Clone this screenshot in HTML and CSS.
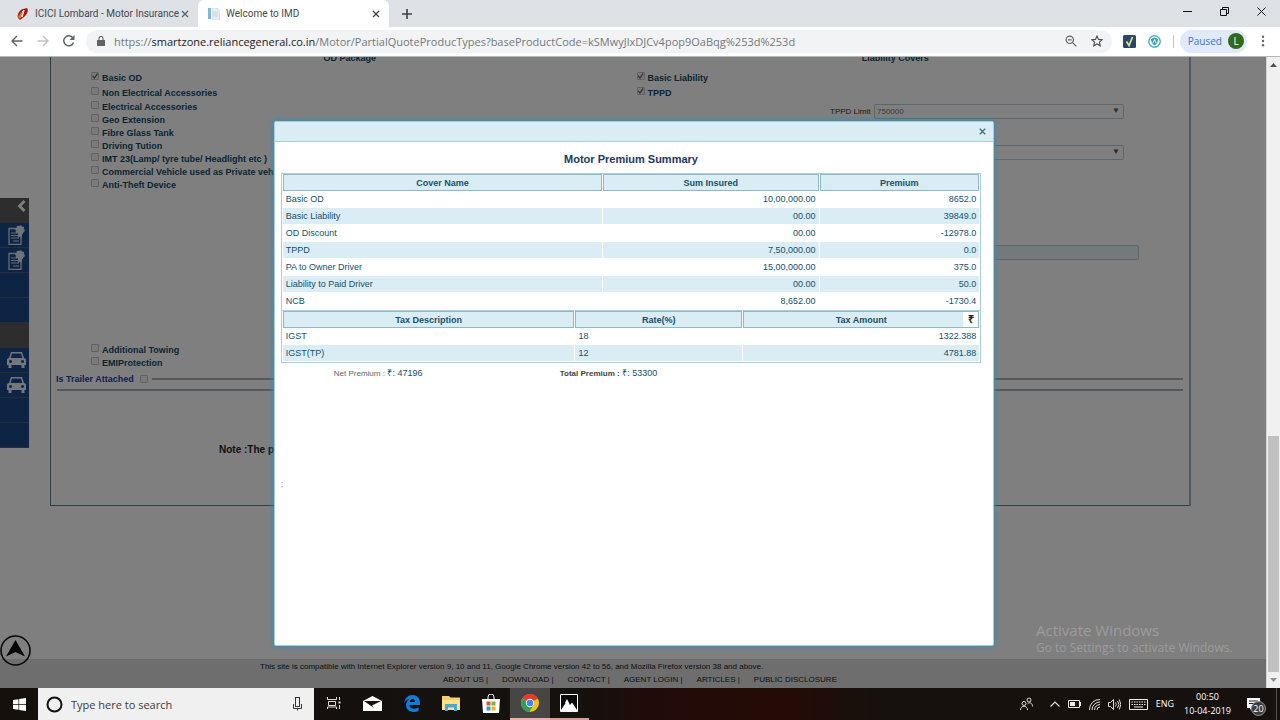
FILE: index.html
```html
<!DOCTYPE html>
<html lang="en">
<head>
<meta charset="utf-8">
<title>Welcome to IMD</title>
<link rel="stylesheet" href="styles.css">
</head>
<body>
<header class="tabstrip">
  <div class="tab tab-idle">
    <svg class="favicon" viewBox="0 0 12 12"><path d="M1 10C0 7 2 2 6 1l4-1c2 2 0 7-3 9l-4 3z" fill="#a3171b"/><path d="M1 9l3-5 2 3-3 4z" fill="#e87722"/><path d="M7 2L5 9M5 4l2-1" stroke="#fff" stroke-width="1.3"/></svg>
    <span class="tab-title">ICICI Lombard - Motor Insurance</span>
    <button class="icon-btn" aria-label="Close tab"><svg width="8" height="8" viewBox="0 0 8 8"><path d="M1 1l6 6M7 1L1 7" stroke="#5f6368" stroke-width="1.3"/></svg></button>
  </div>
  <div class="tab tab-active">
    <svg class="favicon" viewBox="0 0 12 12"><path d="M0 0h3v11H0z" fill="#7fb5dc"/><path d="M4 0h5l3 3v9H4z" fill="#e8eef4" stroke="#c5d0da" stroke-width=".6"/><path d="M5 4h5M5 6h5M5 8h5" stroke="#b9c6d2" stroke-width=".7"/></svg>
    <span class="tab-title">Welcome to IMD</span>
    <button class="icon-btn" aria-label="Close tab"><svg width="8" height="8" viewBox="0 0 8 8"><path d="M1 1l6 6M7 1L1 7" stroke="#3c4043" stroke-width="1.3"/></svg></button>
  </div>
  <button class="icon-btn new-tab" aria-label="New tab"><svg width="10" height="10" viewBox="0 0 10 10"><path d="M5 0v10M0 5h10" stroke="#3c4043" stroke-width="1.6"/></svg></button>
  <div class="window-controls">
    <button class="icon-btn" aria-label="Minimize"><svg width="9" height="9" viewBox="0 0 9 9"><path d="M0 4.5h9" stroke="#111"/></svg></button>
    <button class="icon-btn" aria-label="Restore"><svg width="9" height="9" viewBox="0 0 9 9" fill="none" stroke="#111"><path d="M.5 2.5h6v6h-6zM2.500 2.500v-2h6v6h-2"/></svg></button>
    <button class="icon-btn" aria-label="Close"><svg width="9" height="9" viewBox="0 0 9 9"><path d="M.5.5l8 8M8.500.5l-8 8" stroke="#111"/></svg></button>
  </div>
</header>
<div class="toolbar">
  <button class="icon-btn" aria-label="Back"><svg width="12" height="12" viewBox="0 0 12 12" fill="none" stroke="#5f6368" stroke-width="1.4"><path d="M11.500 6H1M6 1L1 6l5 5"/></svg></button>
  <button class="icon-btn" aria-label="Forward"><svg width="12" height="12" viewBox="0 0 12 12" fill="none" stroke="#bdc1c6" stroke-width="1.4"><path d="M.5 6H11M6 1l5 5-5 5"/></svg></button>
  <button class="icon-btn" aria-label="Reload"><svg width="12" height="12" viewBox="0 0 12 12"><path d="M10.500 7.500A5 5 0 1 1 9.600 2.600" fill="none" stroke="#5f6368" stroke-width="1.5"/><path d="M11.500 0v5h-5z" fill="#5f6368"/></svg></button>
  <div class="address">
    <svg width="8" height="10" viewBox="0 0 8 10"><path d="M0 4h8v6H0z" fill="#5f6368"/><path d="M2 4V2.500a2 2 0 0 1 4 0V4" fill="none" stroke="#5f6368" stroke-width="1.1"/></svg>
    <span class="url">https://<b>smartzone.reliancegeneral.co.in</b>/Motor/PartialQuoteProducTypes?baseProductCode=kSMwyJlxDJCv4pop9OaBqg%253d%253d</span>
    <button class="icon-btn" aria-label="Zoom"><svg width="12" height="12" viewBox="0 0 12 12" fill="none" stroke="#5f6368" stroke-width="1.2"><circle cx="4.800" cy="4.800" r="3.700"/><path d="M7.600 7.600l3.800 3.800M3 4.800h3.600"/></svg></button>
    <button class="icon-btn" aria-label="Bookmark"><svg width="12" height="12" viewBox="0 0 12 12" fill="none" stroke="#4a4e52" stroke-width="1.1"><path d="M6 1l1.500 3.400 3.700.3-2.800 2.400.9 3.700L6 8.900l-3.300 1.900.9-3.700L.8 4.700l3.700-.3z"/></svg></button>
  </div>
  <div class="extensions">
    <svg width="13" height="13" viewBox="0 0 13 13"><rect width="13" height="13" rx="1.500" fill="#24486f"/><path d="M3.500 6.500l2.500 4 3.500-8.500" fill="none" stroke="#e6de6a" stroke-width="1.800"/></svg>
    <svg width="13" height="13" viewBox="0 0 13 13"><circle cx="6.500" cy="6.500" r="5.700" fill="#fff" stroke="#45b5bd" stroke-width="1.400"/><path d="M6.500 2.500L10 4c0 3-1 5-3.500 6.500C4 9 3 7 3 4z" fill="#3a9daf"/><path d="M5 8l1.500-3.500L8 8" stroke="#fff" fill="none"/></svg>
  </div>
  <button class="profile">Paused <span class="avatar">L</span></button>
  <button class="icon-btn" aria-label="Menu"><svg width="4" height="12" viewBox="0 0 4 12" fill="#5f6368"><circle cx="2" cy="1.800" r="1.200"/><circle cx="2" cy="6" r="1.200"/><circle cx="2" cy="10.200" r="1.200"/></svg></button>
</div>

<div class="viewport">
  <div class="page">
    <main class="panel">
      <div class="covers">
        <section class="column">
          <h2>OD Package</h2>
          <label class="check tall"><input type="checkbox" checked disabled>Basic OD</label>
          <label class="check tall"><input type="checkbox" disabled>Non Electrical Accessories</label>
          <label class="check"><input type="checkbox" disabled>Electrical Accessories</label>
          <label class="check"><input type="checkbox" disabled>Geo Extension</label>
          <label class="check"><input type="checkbox" disabled>Fibre Glass Tank</label>
          <label class="check"><input type="checkbox" disabled>Driving Tution</label>
          <label class="check"><input type="checkbox" disabled>IMT 23(Lamp/ tyre tube/ Headlight etc )</label>
          <label class="check"><input type="checkbox" disabled>Commercial Vehicle used as Private vehicle</label>
          <label class="check"><input type="checkbox" disabled>Anti-Theft Device</label>
          <div class="addons">
            <label class="check"><input type="checkbox" disabled>Additional Towing</label>
            <label class="check"><input type="checkbox" disabled>EMIProtection</label>
          </div>
        </section>
        <section class="column">
          <h2>Liability Covers</h2>
          <label class="check tall"><input type="checkbox" checked disabled>Basic Liability</label>
          <label class="check tall"><input type="checkbox" checked disabled>TPPD</label>
          <div class="fields">
            <label for="tppd">TPPD Limit</label>
            <span class="drop"><select id="tppd" disabled><option>750000</option></select></span>
            <span class="drop second"><select aria-label="Cover limit" disabled><option></option></select></span>
            <input class="text-field" type="text" aria-label="Details" disabled>
          </div>
        </section>
      </div>
      <div class="trailer">
        <label>Is Trailer Attached <input type="checkbox" disabled></label>
      </div>
      <p class="note">Note :The premium</p>
    </main>
    <footer class="footer">
      <p>This site is compatible with Internet Explorer version 9, 10 and 11, Google Chrome version 42 to 56, and Mozilla Firefox version 38 and above.</p>
      <nav><a href="#">ABOUT US |</a><a href="#">DOWNLOAD |</a><a href="#">CONTACT |</a><a href="#">AGENT LOGIN |</a><a href="#">ARTICLES |</a><a href="#">PUBLIC DISCLOSURE</a></nav>
    </footer>

    <aside class="rail">
      <div class="rail-head"><svg width="9" height="12" viewBox="0 0 9 12"><path d="M7.500 1L2.500 6l5 5" fill="none" stroke="#fff" stroke-width="2.800"/></svg></div>
      <div class="rail-item"><svg width="17" height="20" viewBox="0 0 17 20"><path d="M9 3.500H1v16h12v-9" fill="none" stroke="#cfdcea" stroke-width="1.300"/><path d="M3 8h6M3 10.500h7M3 13h8M5 16h6" stroke="#cfdcea" stroke-width="1.200"/><circle cx="12" cy="5" r="4" fill="#dfe8f2" stroke="#dfe8f2" stroke-width="1.500" stroke-dasharray="2 1"/><path d="M10 8h4v5l-2-1.500-2 1.500z" fill="#dfe8f2"/></svg></div>
      <div class="rail-item"><svg width="17" height="20" viewBox="0 0 17 20"><path d="M9 3.500H1v16h12v-9" fill="none" stroke="#cfdcea" stroke-width="1.300"/><path d="M3 8h6M3 10.500h7M3 13h8M5 16h6" stroke="#cfdcea" stroke-width="1.200"/><circle cx="12" cy="5" r="4" fill="#dfe8f2" stroke="#dfe8f2" stroke-width="1.500" stroke-dasharray="2 1"/><path d="M10 8h4v5l-2-1.500-2 1.500z" fill="#dfe8f2"/></svg></div>
      <div class="rail-item"></div>
      <div class="rail-item"></div>
      <div class="rail-gap"></div>
      <div class="rail-item"><svg width="19" height="16" viewBox="0 0 19 16"><path fill="#e8eff8" fill-rule="evenodd" d="M4 0h11l2 6 2 1v6h-1.500v3h-3v-3h-10v3h-3v-3H0V7l2-1zM5 1.500L3.700 6h11.600L14 1.500zM3.500 8a1.500 1.500 0 1 0 .1 0zm12 0a1.500 1.500 0 1 0 .1 0z"/></svg></div>
      <div class="rail-item"><svg width="19" height="16" viewBox="0 0 19 16"><path fill="#e8eff8" fill-rule="evenodd" d="M4 0h11l2 6 2 1v6h-1.500v3h-3v-3h-10v3h-3v-3H0V7l2-1zM5 1.500L3.700 6h11.600L14 1.500zM3.500 8a1.500 1.500 0 1 0 .1 0zm12 0a1.500 1.500 0 1 0 .1 0z"/></svg></div>
      <div class="rail-item"></div>
      <div class="rail-item"></div>
    </aside>
    <button class="to-top" aria-label="Back to top"><svg width="31" height="31" viewBox="0 0 31 31"><circle cx="15.500" cy="15.500" r="14.500" fill="none" stroke="#111" stroke-width="1.600"/><path d="M15.500 5L25 21.500l-9.500-4.500L6 21.500z" fill="#000"/></svg></button>

    <div class="overlay">
      <div class="dialog" role="dialog" aria-labelledby="summary-title">
        <div class="dialog-bar"><button class="icon-btn" aria-label="Close dialog"><svg width="7" height="7" viewBox="0 0 7 7"><path d="M.8.8l5.400 5.400M6.200.8L.8 6.200" stroke="#4a7890" stroke-width="1.500"/></svg></button></div>
        <div class="dialog-body">
          <h1 id="summary-title">Motor Premium Summary</h1>
          <table class="grid cover-grid">
            <colgroup><col class="c-name"><col class="c-sum"><col></colgroup>
            <thead><tr><th>Cover Name</th><th>Sum Insured</th><th>Premium</th></tr></thead>
            <tbody>
              <tr><td>Basic OD</td><td class="num">10,00,000.00</td><td class="num">8652.0</td></tr>
              <tr><td>Basic Liability</td><td class="num">00.00</td><td class="num">39849.0</td></tr>
              <tr><td>OD Discount</td><td class="num">00.00</td><td class="num">-12978.0</td></tr>
              <tr><td>TPPD</td><td class="num">7,50,000.00</td><td class="num">0.0</td></tr>
              <tr><td>PA to Owner Driver</td><td class="num">15,00,000.00</td><td class="num">375.0</td></tr>
              <tr><td>Liability to Paid Driver</td><td class="num">00.00</td><td class="num">50.0</td></tr>
              <tr><td>NCB</td><td class="num">8,652.00</td><td class="num">-1730.4</td></tr>
            </tbody>
          </table>
          <table class="grid tax-grid">
            <colgroup><col class="c-tax"><col class="c-rate"><col></colgroup>
            <thead><tr><th>Tax Description</th><th>Rate(%)</th><th>Tax Amount<span class="rupee">₹</span></th></tr></thead>
            <tbody>
              <tr><td>IGST</td><td>18</td><td class="num">1322.388</td></tr>
              <tr><td>IGST(TP)</td><td>12</td><td class="num">4781.88</td></tr>
            </tbody>
          </table>
          <div class="totals">
            <div><span class="net-label">Net Premium :</span> ₹: 47196</div>
            <div><span class="total-label">Total Premium :</span> ₹: 53300</div>
          </div>
          <p class="stray">;</p>
        </div>
      </div>
    </div>
    <div class="watermark"><p class="wm-title">Activate Windows</p><p>Go to Settings to activate Windows.</p></div>
  </div>
  <div class="scrollbar">
    <svg width="7" height="4" viewBox="0 0 7 4"><path d="M3.500 0L7 4H0z" fill="#505050"/></svg>
    <div class="thumb"></div>
    <svg width="7" height="4" viewBox="0 0 7 4"><path d="M0 0h7L3.500 4z" fill="#909090"/></svg>
  </div>
</div>

<div class="taskbar">
  <button class="start" aria-label="Start"><svg width="13" height="13" viewBox="0 0 13 13" fill="#fff"><path d="M0 2l5.500-.8V6H0zM6.200 1L13 0v6H6.200zM0 6.800h5.500v4.900L0 11zM6.200 6.800H13V13l-6.800-1z"/></svg></button>
  <div class="search">
    <svg width="17" height="17" viewBox="0 0 17 17"><circle cx="8.500" cy="8.500" r="7" fill="none" stroke="#111" stroke-width="2"/></svg>
    <input type="text" placeholder="Type here to search" aria-label="Search">
    <svg width="9" height="14" viewBox="0 0 9 14" fill="none" stroke="#333"><rect x="2.500" y=".5" width="4" height="9"/><path d="M.5 7v4.500h8V7M4.500 11.500v2"/></svg>
  </div>
  <div class="apps">
    <button aria-label="Task view"><svg width="14" height="14" viewBox="0 0 14 14" fill="none" stroke="#ddd"><path d="M.5 1v2.500h9V1M1.500 5.500h7v4h-7zM.5 13v-2h9v2M12.500 1v3M12.500 9v4"/><path d="M11.500 6.500h2" stroke-width="2"/></svg></button>
    <button aria-label="Mail"><svg width="19" height="15" viewBox="0 0 19 15"><path d="M0 5l9.500-5L19 5v10H0z" fill="#fff"/><path d="M1 5h17L9 9.500l2 2.500z" fill="#16110e"/></svg></button>
    <button aria-label="Edge"><svg width="16" height="17" viewBox="0 0 16 17"><path fill="#0f7cdb" d="M0 8C1 3 4 0 8.500 0 13 0 16 3.500 16 8v2H5.500c.2 4 5.500 4.500 9 2.500V16C9 18.500 2 16.500 2 10c0-3 1.500-5 3.500-6C3 4.500 1 6 0 8zm5.700-1H11c0-4-4.700-4-5.300 0z"/></svg></button>
    <button aria-label="File Explorer"><svg width="18" height="15" viewBox="0 0 18 15"><path d="M0 0h7l1.500 1.500H18V14H0z" fill="#f5d069"/><path d="M0 4h18v10H0z" fill="#fce08b"/><path d="M3 15V8h12v7h-3v-3.500H6V15z" fill="#44a9d9"/></svg></button>
    <button aria-label="Store"><svg width="18" height="19" viewBox="0 0 18 19"><path d="M6 5V3a3 3 0 0 1 6 0v2" fill="none" stroke="#fff"/><path d="M0 5h18l-1 14H1z" fill="#fff"/><path d="M4.500 7.500h4v4h-4z" fill="#e8502a"/><path d="M9.500 7.500h4v4h-4z" fill="#7bb32e"/><path d="M4.500 12.500h4v4h-4z" fill="#2a9fd8"/><path d="M9.500 12.500h4v4h-4z" fill="#f5b71d"/></svg></button>
    <button class="current" aria-label="Chrome"><svg width="18" height="18" viewBox="0 0 18 18"><circle cx="9" cy="9" r="9" fill="#fbc116"/><path d="M9 9L1.200 4.500A9 9 0 0 1 16.800 4.500z" fill="#e33b2e"/><path d="M9 5h7.900l-.1-.5L9 3z" fill="#e33b2e"/><path d="M1.200 4.500A9 9 0 0 0 8.500 18l4-7L9 9z" fill="#2fa24f"/><circle cx="9" cy="9" r="4.200" fill="#fff"/><circle cx="9" cy="9" r="3.300" fill="#4285f4"/></svg></button>
    <button class="open" aria-label="Photos"><svg width="18" height="18" viewBox="0 0 18 18"><path d="M.5.5h17v17H.5z" fill="#080808" stroke="#fff"/><path d="M1 16l6-9 3 4 2-2.500 5 7.500v1.500H1z" fill="#fff"/><path d="M5 9l2-4 2.500 5z" fill="#fff"/></svg></button>
  </div>
  <div class="tray">
    <svg width="13" height="14" viewBox="0 0 13 14" fill="none" stroke="#ddd"><circle cx="9" cy="3" r="2"/><circle cx="4" cy="6.500" r="2"/><path d="M.5 13c0-5 7-5 7 0M7.500 7c2-2.500 5-1 5 2.500"/></svg>
    <svg width="10" height="6" viewBox="0 0 10 6"><path d="M.5 5.500L5 1l4.500 4.500" fill="none" stroke="#ddd" stroke-width="1.200"/></svg>
    <svg width="13" height="8" viewBox="0 0 13 8"><path d="M.5.5h11v7H.5z" fill="none" stroke="#eee"/><path d="M2 2h5v4H2zM12 2h1v4h-1z" fill="#eee"/></svg>
    <svg width="11" height="11" viewBox="0 0 11 11" fill="none" stroke="#ddd"><path d="M.5 11A10 10 0 0 1 11 .5M3 11a8 8 0 0 1 8-8M5.500 11A6 6 0 0 1 11 5.500M8 11a3 3 0 0 1 3-3"/></svg>
    <svg width="13" height="11" viewBox="0 0 13 11" fill="none" stroke="#ddd"><path d="M.5 3.500h2l3-3v10l-3-3h-2zM7.500 3.500q1.500 2 0 4M9.500 2q3 3.500 0 7M11.300.5q3 5 0 10"/></svg>
    <svg width="19" height="11" viewBox="0 0 19 11" fill="none" stroke="#eee"><path d="M.5.5h18v10H.5z"/><path d="M2.500 3h14M2.500 5.500h14" stroke-dasharray="1.500 1"/><path d="M5 8h9"/></svg>
    <span>ENG</span>
    <span class="clock">00:50<br>10-04-2019</span>
    <span class="notice"><svg width="13" height="12" viewBox="0 0 13 12"><path d="M0 0h13v10H5l-2 2v-2H0z" fill="#fff"/><path d="M2 3h9M2 5.500h9" stroke="#222"/></svg><span class="count">20</span></span>
  </div>
</div>
</body>
</html>
```
FILE: styles.css
```css
* { box-sizing: border-box; }
body, h1, h2, p { margin: 0; }
body {
  display: flex;
  flex-direction: column;
  height: 100vh;
  overflow: hidden;
  font-family: "Liberation Sans", Arial, sans-serif;
  font-size: 9px;
}
svg { display: block; flex: none; }
button { font: inherit; border: 0; padding: 0; background: none; color: inherit; }
.icon-btn { display: flex; align-items: center; justify-content: center; flex: none; }

/* Browser tabs */
.tabstrip {
  display: flex;
  align-items: stretch;
  height: 27px;
  flex: none;
  background: #dee1e6;
  color: #45494d;
  font: 10px Roboto, sans-serif;
}
.tab { display: flex; align-items: center; gap: 6px; }
.tab-idle { width: 198px; padding: 0 9px 0 17px; }
.tab-active { width: 191px; padding: 0 9px 0 10px; background: #fff; border-radius: 6px 6px 0 0; }
.tab-title { flex: 1; min-width: 0; white-space: nowrap; }
.favicon { width: 12px; height: 12px; }
.new-tab { margin-left: 13px; }
.window-controls { display: flex; gap: 28px; margin-left: auto; padding: 0 14px 4px 0; }

/* Address bar */
.toolbar {
  display: flex;
  align-items: center;
  height: 30px;
  flex: none;
  gap: 14px;
  padding: 0 15px 1px 11px;
  background: #fff;
  border-bottom: 1px solid #b4b6b8;
}
.address {
  display: flex;
  align-items: center;
  gap: 9px;
  flex: 1;
  min-width: 0;
  height: 23px;
  margin-left: -3px;
  padding: 0 9px 0 11px;
  border-radius: 12px;
  background: #f1f3f4;
}
.url { flex: 1; min-width: 0; overflow: hidden; white-space: nowrap; font: 11px "Open Sans", sans-serif; color: #75797d; }
.url b { font-weight: 400; color: #202124; }
.address .icon-btn + .icon-btn { margin-left: 5px; }
.extensions { display: flex; gap: 12px; margin-left: -3px; padding-right: 12px; border-right: 1px solid #c4c7ca; }
.profile {
  display: flex;
  align-items: center;
  gap: 6px;
  height: 23px;
  margin-left: -8px;
  padding: 0 3px 0 8px;
  border-radius: 12px;
  background: #e0eafa;
  color: #3b74dc;
  font: 10px "Open Sans", sans-serif;
}
.avatar { width: 16px; height: 16px; border-radius: 50%; background: #33691e; color: #fff; line-height: 16px; text-align: center; }

/* Web page */
.viewport { display: flex; flex: 1; min-height: 0; }
.page { position: relative; display: flex; flex-direction: column; flex: 1; min-width: 0; overflow: hidden; background: #fff; }
.panel { margin: 0 75px 0 50px; border: solid #54808f; border-width: 0 2px 1px 1px; border-right-color: #a0b4bd; padding-bottom: 48px; }
.covers { display: grid; grid-template-columns: 1fr 1fr; padding: 0 21px 0 26px; }
.column { padding-left: 14px; margin-top: -5px; }
h2 { height: 18px; margin-left: -14px; font-size: 9px; line-height: 12px; text-align: center; color: #134b66; }
.check { display: flex; align-items: center; gap: 3px; height: 13px; font-weight: 700; color: #134b66; white-space: nowrap; }
.check.tall { height: 15px; }
.check input { margin-bottom: 3px; }
input[type="checkbox"] { appearance: none; flex: none; width: 8px; height: 8px; margin: 0; border: 1px solid #c4c4c4; border-radius: 1px; background: #f4f4f4; }
input[type="checkbox"]:checked::after { content: ""; display: block; width: 6px; height: 6px; background: #666; clip-path: polygon(0 55%, 20% 40%, 40% 65%, 85% 0, 100% 15%, 42% 100%); }
.check input[type="checkbox"] { margin-bottom: 3px; }
.addons { margin-top: 152px; }
.fields { display: grid; grid-template-columns: 41px 250px; column-gap: 3px; align-items: center; justify-content: end; margin: 4px 44px 0 0; color: #333; }
.fields label { font-size: 8px; white-space: nowrap; }
.drop { position: relative; height: 15px; }
.drop::after { content: "▼"; position: absolute; right: 4px; top: 2px; font-size: 8px; color: #555; }
select, .text-field { appearance: none; display: block; width: 100%; height: 15px; border: 1px solid #b5cfda; border-radius: 2px; padding: 0 2px; background: #fff; color: #777; font: 8px "Liberation Sans", Arial, sans-serif; opacity: 1; }
.second { grid-column: 2; margin-top: 26px; }
.text-field { grid-column: 2; width: 265px; margin-top: 85px; background: #e8f3f8; }
.trailer { display: flex; height: 22px; margin: 0 6px; border-bottom: 2px solid #a0b4bd; align-items: center; gap: 4px; color: #1d419c; font-weight: 700; }
.trailer label { display: flex; align-items: center; gap: 6px; margin-left: -1px; }
.trailer::after { content: ""; flex: 1; height: 2px; background: #a0b4bd; }
.note { margin: 52px 0 0 168px; font-size: 10px; font-weight: 700; line-height: 14px; color: #222; }
.footer { margin-top: auto; height: 29px; padding-top: 1px; background: #dcdcdc; color: #222; font-size: 8px; line-height: 13px; }
.footer p { padding-left: 260px; white-space: nowrap; }
.footer nav { display: flex; justify-content: center; gap: 14px; padding-left: 14px; }
.footer a { color: inherit; text-decoration: none; }

/* Side menu and back-to-top button float over the page */
.rail { position: absolute; left: 0; top: 141px; width: 29px; }
.rail-head, .rail-gap { height: 25px; background: #5a5a5a; }
.rail-head { padding: 2px 0 0 17px; }
.rail-item { display: flex; align-items: center; justify-content: center; height: 25px; padding-left: 3px; border-bottom: 1px solid #4a5a70; background: #1b488a; }
.to-top { position: absolute; left: 0; bottom: 22px; }

/* Dialog */
.overlay { position: absolute; inset: 0; display: flex; justify-content: center; align-items: flex-start; padding: 64px 0 0 2px; background: rgba(0, 0, 0, .5); }
.dialog { width: 57%; height: 525px; border: 1px solid #9fcfe0; border-radius: 2px; background: #fff; box-shadow: 0 0 5px 1px #3d8cae; color: #15506c; }
.dialog-bar { display: flex; justify-content: flex-end; height: 20px; padding-right: 7px; background: #daecf4; border-bottom: 1px solid #a9cfdd; }
.dialog-body { padding: 10px 12px 0 6px; }
h1 { height: 21px; line-height: 14px; font-size: 11px; text-align: center; color: #1c3768; }
.grid { width: 100%; table-layout: fixed; border-collapse: separate; border-spacing: 1px 0; border: 1px solid #a9cfdd; }
.cover-grid { border-bottom: 0; }
.c-name { width: 46%; }
.c-sum { width: 31%; }
.c-tax { width: 42%; }
.c-rate { width: 24%; }
.grid th { position: relative; height: 17px; padding: 0; border: 1px solid #8fb8c8; background: #daecf4; }
.grid td { height: 17px; padding: 0 3px; border-bottom: 1px solid #fff; }
.grid tbody tr:nth-child(even) td { background: #daecf4; }
.grid .num { text-align: right; }
.rupee { position: absolute; right: 0; top: 0; width: 15px; height: 15px; background: #fff; color: #222; font-size: 11px; line-height: 15px; }
.totals { display: grid; grid-template-columns: 226px 1fr; padding: 4px 0 0 53px; line-height: 13px; }
.net-label { font-size: 8px; color: #666; }
.total-label { font-size: 8px; font-weight: 700; color: #444; }
.stray { margin-top: 98px; line-height: 13px; color: #999; }

.watermark { position: absolute; left: 1036px; bottom: 31px; font: 12px/18px "Open Sans", sans-serif; color: #9c9c9c; }
.wm-title { font-size: 15px; }

.scrollbar { display: flex; flex-direction: column; align-items: center; width: 14px; flex: none; padding: 6px 0; background: #f0f0f0; border-left: 1px solid #d5d5d5; }
.thumb { width: 11px; height: 236px; margin: auto 0 6px; background: #c1c1c1; }

/* Taskbar */
.taskbar { display: flex; height: 32px; flex: none; background: linear-gradient(90deg, #16100d, #14110e 45%, #220b09 52%, #240b05 62%, #17110d 68%, #16110e); color: #fff; }
.start { width: 38px; display: flex; align-items: center; justify-content: center; }
.search { display: flex; align-items: center; gap: 8px; width: 276px; padding: 0 12px 0 8px; background: #f0f0f0; }
.search input { flex: 1; min-width: 0; border: 0; padding: 0; background: none; font: 11px "Open Sans", sans-serif; }
.search input::placeholder { color: #3c3c3c; opacity: 1; }
.apps { display: flex; width: 275px; }
.apps button { display: flex; flex: 1; align-items: center; justify-content: center; border-bottom: 2px solid transparent; }
.apps .current { background: #484644; border-color: #eeb0a8; }
.apps .open { border-color: #d99c94; }
.tray { display: flex; align-items: center; gap: 8px; margin: 0 3px 0 auto; padding-right: 16px; border-right: 1px solid #55504d; font: 9px/14px "Open Sans", sans-serif; }
.tray > svg:first-child { margin-right: 9px; }
.clock { text-align: center; white-space: nowrap; margin: 0 8px 0 2px; }
.notice { position: relative; }
.count { position: absolute; left: 4px; top: 3px; width: 15px; height: 15px; border: 1px solid #999; border-radius: 50%; background: #3c3c3c; line-height: 13px; text-align: center; }
```
